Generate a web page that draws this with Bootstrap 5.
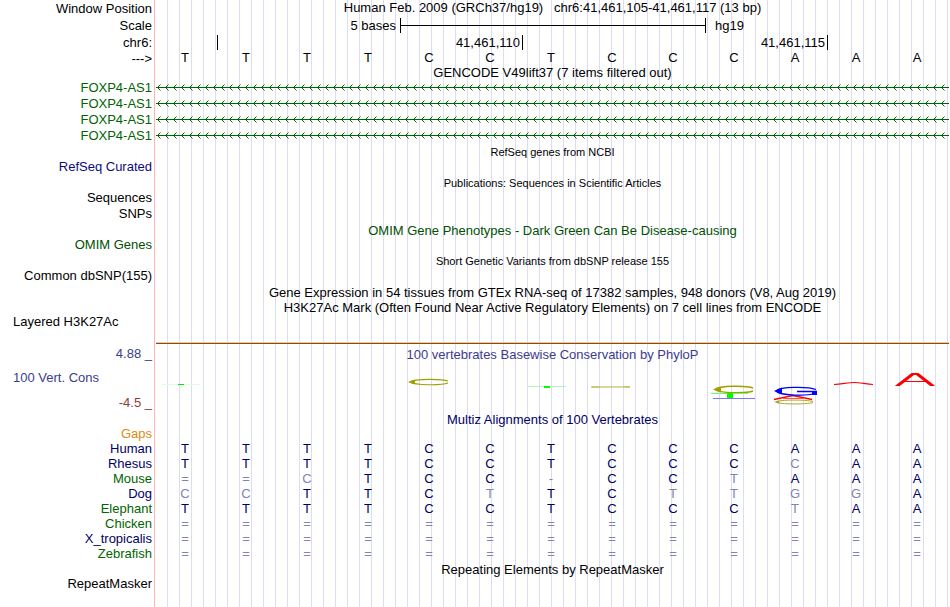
<!DOCTYPE html>
<html lang="en">
<head>
    <meta charset="UTF-8">
    <meta name="viewport" content="width=device-width, initial-scale=1.0">
    <title>Human hg19 chr6:41,461,105-41,461,117</title>
    <link href="https://cdn.jsdelivr.net/npm/bootstrap@5.3.0/dist/css/bootstrap.min.css" rel="stylesheet">
    <style>
        body {
            font-family: "Liberation Sans", Arial, sans-serif;
            font-size: 13px;
            line-height: 15px;
            color: #000;
        }

        /* label gutter with its pink edge, then a guide line every 12px */
        .browser {
            padding-right: 1px;
            background-image:
                linear-gradient(to right, #fff 154px, #ffb4b4 154px 155px, #fff 155px 156px, transparent 156px),
                repeating-linear-gradient(to right, transparent 0 11px, #dcdcfa 11px 12px);
        }

        .tracks {
            table-layout: fixed;
            border-collapse: separate;
            border-spacing: 0;
        }
        .tracks th, .tracks td { padding: 0; vertical-align: middle; white-space: nowrap; }
        .tracks th { font-weight: 400; text-align: right; padding-right: 4px; }
        .tracks tbody:not(.ruler) th, .tracks td.base { line-height: 13px; padding-bottom: 2px; }
        .tracks th.indent { text-align: left; padding-left: 13px; }
        .tracks td.base { text-align: center; padding-right: 3px; }
        .tracks td.position { vertical-align: top; }
        .tracks svg { display: block; }
        .label-col { width: 156px; }

        .h-14 { height: 14px; line-height: 14px; }
        .h-15 { height: 15px; }
        .h-16 { height: 16px; }
        .h-17 { height: 17px; }
        .h-33 { height: 33px; }

        .note { font-size: 11px; }
        .gene { color: #006400; }
        .omim { color: #005000; }
        .refseq { color: #0c0c78; }
        .phylo { color: #3c3c8c; }
        .phylo-neg { color: #8c3c3c; }
        .navy { color: #000064; }
        .gaps { color: #e08a10; }
        .diff { color: #8282b4; }

        .pos-tick { height: 15px; border-left: 1px solid #000; padding-right: 2px; }
        .scale-bar { height: 15px; border: solid #000; border-width: 0 1px; margin-right: -1px; }
        .scale-bar hr { margin: 0; border-top: 1px solid #000; opacity: 1; }
        .scale-text { padding-right: 4px; }
        .scale-db { padding-left: 10px; }
        .signal { height: 2px; border-top: 1px solid #ffc878; background: #785028; margin-bottom: 2px; }
    </style>
</head>
<body>
    <main class="browser min-vh-100">
        <table class="tracks w-100">
            <colgroup>
                <col class="label-col">
                <col span="13">
            </colgroup>
            <tbody class="ruler">
                <tr class="h-17">
                    <th scope="row">Window Position</th>
                    <td colspan="13" class="text-center position">Human Feb. 2009 (GRCh37/hg19) &nbsp; chr6:41,461,105-41,461,117 (13 bp)</td>
                </tr>
                <tr class="h-17">
                    <th scope="row">Scale</th>
                    <td colspan="4" class="text-end"><div class="scale-text">5 bases</div></td>
                    <td colspan="5"><div class="scale-bar d-flex align-items-center"><hr class="flex-fill"></div></td>
                    <td colspan="4"><div class="scale-db">hg19</div></td>
                </tr>
                <tr class="h-16">
                    <th scope="row">chr6:</th>
                    <td></td>
                    <td colspan="5" class="text-end"><div class="pos-tick">41,461,110</div></td>
                    <td colspan="5" class="text-end"><div class="pos-tick">41,461,115</div></td>
                    <td colspan="2"><div class="pos-tick"></div></td>
                </tr>
                <tr class="h-16" data-bases="TTTTCCTCCCAAA"><th scope="row">---&gt;</th></tr>
                <tr class="h-14"><th></th><td colspan="13" class="text-center">GENCODE V49lift37 (7 items filtered out)</td></tr>
            </tbody>

            <tbody id="genes"></tbody>

            <tbody>
                <tr class="h-16"><th></th><td colspan="13" class="text-center note">RefSeq genes from NCBI</td></tr>
                <tr class="h-15"><th scope="row" class="refseq">RefSeq Curated</th><td colspan="13"></td></tr>
                <tr class="h-16"><th></th><td colspan="13" class="text-center note">Publications: Sequences in Scientific Articles</td></tr>
                <tr class="h-15"><th scope="row">Sequences</th><td colspan="13"></td></tr>
                <tr class="h-16"><th scope="row">SNPs</th><td colspan="13"></td></tr>
                <tr class="h-16"><th></th><td colspan="13" class="text-center omim">OMIM Gene Phenotypes - Dark Green Can Be Disease-causing</td></tr>
                <tr class="h-15"><th scope="row" class="omim">OMIM Genes</th><td colspan="13"></td></tr>
                <tr class="h-16"><th></th><td colspan="13" class="text-center note">Short Genetic Variants from dbSNP release 155</td></tr>
                <tr class="h-15"><th scope="row">Common dbSNP(155)</th><td colspan="13"></td></tr>
                <tr class="h-16"><th></th><td colspan="13" class="text-center">Gene Expression in 54 tissues from GTEx RNA-seq of 17382 samples, 948 donors (V8, Aug 2019)</td></tr>
                <tr class="h-15"><th></th><td colspan="13" class="text-center">H3K27Ac Mark (Often Found Near Active Regulatory Elements) on 7 cell lines from ENCODE</td></tr>
                <tr class="h-15"><th scope="row" class="indent">Layered H3K27Ac</th><td colspan="13"></td></tr>
                <tr class="h-16"><th></th><td colspan="13" class="align-bottom"><div class="signal"></div></td></tr>
            </tbody>

            <tbody>
                <tr class="h-16">
                    <th class="phylo">4.88 _</th>
                    <td colspan="13" class="text-center phylo">100 vertebrates Basewise Conservation by PhyloP</td>
                </tr>
                <tr class="h-33" id="logo"><th scope="row" class="phylo indent">100 Vert. Cons</th></tr>
                <tr class="h-17"><th class="phylo-neg">-4.5 _</th></tr>
                <tr class="h-15"><th></th><td colspan="13" class="text-center navy">Multiz Alignments of 100 Vertebrates</td></tr>
                <tr class="h-15"><th scope="row" class="gaps">Gaps</th><td colspan="13"></td></tr>
            </tbody>

            <tbody id="alignment"></tbody>

            <tbody>
                <tr class="h-15"><th></th><td colspan="13" class="text-center">Repeating Elements by RepeatMasker</td></tr>
                <tr class="h-15"><th scope="row">RepeatMasker</th><td colspan="13"></td></tr>
            </tbody>
        </table>
    </main>

    <script src="https://cdn.jsdelivr.net/npm/bootstrap@5.3.0/dist/js/bootstrap.bundle.min.js"></script>
    <script>
        const human = "TTTTCCTCCCAAA";

        const species = [
            { name: "Human", color: "navy", bases: "TTTTCCTCCCAAA" },
            { name: "Rhesus", color: "navy", bases: "TTTTCCTCCCCAA" },
            { name: "Mouse", color: "gene", bases: "==CTCC-CCTAAA" },
            { name: "Dog", color: "navy", bases: "CCTTCTTCTTGGA" },
            { name: "Elephant", color: "gene", bases: "TTTTCCTCCCTAA" },
            { name: "Chicken", color: "gene", bases: "=============" },
            { name: "X_tropicalis", color: "navy", bases: "=============" },
            { name: "Zebrafish", color: "gene", bases: "=============" }
        ];

        // conservation marks, keyed by base column
        const marks = {
            0: `<path d="M6 22.5H44" stroke="#dfd"/>
                <path d="M22 22.5h6" stroke="#0e0"/>`,
            4: `<path d="M48 19C42 16.800 15 16.500 10 20C15 23.500 42 23.500 48 21" stroke="#a0a000" stroke-width="1.200"/>
                <path d="M8 20 15 17.500V22.500z" fill="#a0a000"/>`,
            6: `<path d="M6 24.5H44" stroke="#b4f5b4"/>
                <path d="M22 25h6" stroke="#0f0" stroke-width="2"/>`,
            7: `<path d="M8 25H47" stroke="#a0a000" stroke-width="2" opacity=".4"/>
                <path d="M9 25h7M41 25h6" stroke="#a0a000" opacity=".5"/>`,
            9: `<path d="M48 26C42 23.500 14 23.500 10 27.500C14 31.500 42 31.500 48 29" stroke="#a0a000" stroke-width="1.400"/>
                <path d="M8 27.500 16 24.500V30.500z" fill="#a0a000"/>
                <path d="M6 31.500H43" stroke="#6f6"/>
                <path d="M22 31h6v5h-6z" fill="#0f0"/>
                <path d="M8 36.500H50" stroke="#7878ff"/>`,
            10: `<path d="M47 39.500C40 37.500 13 37.500 10 40C13 42.500 40 42.500 47 40.500" stroke="#aaaa28"/>
                <path d="M8 40 13 38.500V41.500z" fill="#aaaa28"/>
                <path d="M8 37.500 27 33.500 46 37.500" stroke="#f00" stroke-width="1.500"/>
                <path d="M17 36.500H37" stroke="#f55"/>
                <path d="M50 27.500C42 24.500 14 24.500 10 29C14 34 42 34 48 31.500M31 29.500H51" stroke="#00f" stroke-width="1.300"/>
                <path d="M8 29 16 25.500V32z" fill="#00f"/>
                <path d="M46 29h5v4h-5z" fill="#00f"/>`,
            11: `<path d="M7 22.500C15 22 22 20.500 27 20.500S39 22 46 22.500" stroke="#f00" stroke-width="1.200"/>`,
            12: `<svg y="11" width="61" height="13">
                    <path d="M8 14 26 0M46 14 28 0" stroke="#f00" stroke-width="3"/>
                    <path d="M24 1H30" stroke="#f00" stroke-width="2"/>
                    <path d="M15 8.500H39" stroke="#f00"/>
                </svg>`
        };

        function baseCell(base, color) {
            return `<td class="base ${color}">${base}</td>`;
        }

        function renderGenes() {
            const row = id => `
                <tr class="h-16">
                    <th scope="row" class="gene">FOXP4-AS1</th>
                    <td colspan="13">
                        <svg width="100%" height="16" fill="none" stroke="#006400">
                            <defs>
                                <pattern id="strand${id}" width="8" height="16" patternUnits="userSpaceOnUse">
                                    <path d="M0 7.500H8M4.500 4.500 1.500 7.500 4.500 10.500"/>
                                </pattern>
                            </defs>
                            <rect width="100%" height="16" fill="url(#strand${id})" stroke="none"/>
                        </svg>
                    </td>
                </tr>`;
            document.getElementById("genes").innerHTML = [1, 2, 3, 4].map(row).join("");
        }

        function renderLogo() {
            let cells = "";
            for (let i = 0; i < human.length; i++) {
                cells += `<td rowspan="2"><svg width="61" height="50" viewBox="0 0 61 50" fill="none">${marks[i] || ""}</svg></td>`;
            }
            document.getElementById("logo").innerHTML += cells;
        }

        function renderAlignment() {
            document.getElementById("alignment").innerHTML = species.map(s => `
                <tr class="h-15">
                    <th scope="row" class="${s.color}">${s.name}</th>
                    ${[...s.bases].map((b, i) => baseCell(b, b === human[i] ? "navy" : "diff")).join("")}
                </tr>`).join("");
        }

        document.querySelectorAll("[data-bases]").forEach(row => {
            row.innerHTML += [...row.dataset.bases].map(b => baseCell(b, "")).join("");
        });
        renderGenes();
        renderLogo();
        renderAlignment();
    </script>
</body>
</html>
